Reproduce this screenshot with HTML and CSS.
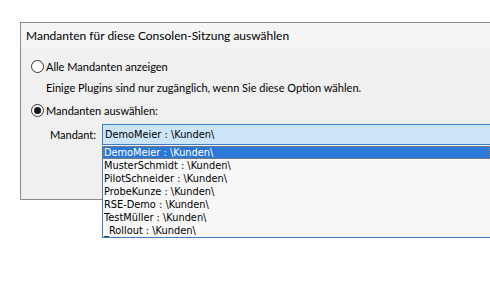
FILE: index.html
```html
<!DOCTYPE html>
<html lang="de">
<head>
  <meta charset="UTF-8">
  <title>Mandanten auswählen</title>
  <link rel="stylesheet" href="styles.css">
</head>
<body>

  <div class="dialog">
    <div class="title">Mandanten für diese Consolen-Sitzung auswählen</div>
    <div class="content">
      <div class="option">
        <span class="radio"></span>
        <span>Alle Mandanten anzeigen</span>
      </div>
      <div class="hint">Einige Plugins sind nur zugänglich, wenn Sie diese Option wählen.</div>
      <div class="option">
        <span class="radio checked"></span>
        <span>Mandanten auswählen:</span>
      </div>
      <div class="field">
        <span class="field-label">Mandant:</span>
        <div class="combo">
          <div class="combo-value">DemoMeier : \Kunden\</div>
          <ul class="combo-list">
            <li class="selected">DemoMeier : \Kunden\</li>
            <li>MusterSchmidt : \Kunden\</li>
            <li>PilotSchneider : \Kunden\</li>
            <li>ProbeKunze : \Kunden\</li>
            <li>RSE-Demo : \Kunden\</li>
            <li>TestMüller : \Kunden\</li>
            <li>_Rollout : \Kunden\</li>
          </ul>
        </div>
      </div>
    </div>
  </div>

</body>
</html>
```

FILE: styles.css
```css
html, body {
  min-height: 100%;
}
body {
  margin: 0;
  min-height: 287px;
  background: #fff;
  font-family: 'Lato', 'Noto Sans', sans-serif;
  font-size: 11px;
  color: #000;
}
.dialog {
  margin: 22px 0 0 20px;
  border: 1px solid #8c8c8c;
  border-right: none;
  height: 176px;
  background: #f0f0f0;
}
.title {
  height: 25px;
  line-height: 25px;
  padding-left: 5px;
  background: #f5f5f5;
  font-size: 12px;
}
.content {
  padding: 8px 0 0 10px;
}
.option {
  display: flex;
  align-items: center;
  gap: 2px;
  height: 20px;
}
.radio {
  width: 11px;
  height: 11px;
  border: 1px solid #333;
  border-radius: 50%;
  background: #fff;
  display: flex;
  align-items: center;
  justify-content: center;
}
.radio.checked::after {
  content: "";
  width: 7px;
  height: 7px;
  border-radius: 50%;
  background: #1a1a1a;
}
.hint {
  padding-left: 15px;
  height: 24px;
  line-height: 24px;
}
.field {
  display: flex;
  align-items: flex-start;
  margin-top: 4px;
  padding-left: 19px;
}
.field-label {
  width: 52px;
  line-height: 21px;
}
.combo {
  flex: 1;
  font-family: 'DejaVu Sans', sans-serif;
  font-size: 9.8px;
}
.combo-value {
  height: 19px;
  line-height: 19px;
  border: 1px solid #3b7fc4;
  border-right: none;
  background: #cce4f7;
  padding-left: 2px;
}
.combo-list {
  margin: 0;
  padding: 0;
  list-style: none;
  border: 1px solid #3b7fc4;
  border-right: none;
  border-top: none;
  background: #f7f7f7;
}
.combo-list li {
  height: 13px;
  line-height: 13px;
  padding-left: 1px;
}
.combo-list li.selected {
  margin-top: 1px;
  background: #2b78d8;
  color: #fff;
  outline: 1px dotted #c07a2c;
  outline-offset: -1px;
}
```
